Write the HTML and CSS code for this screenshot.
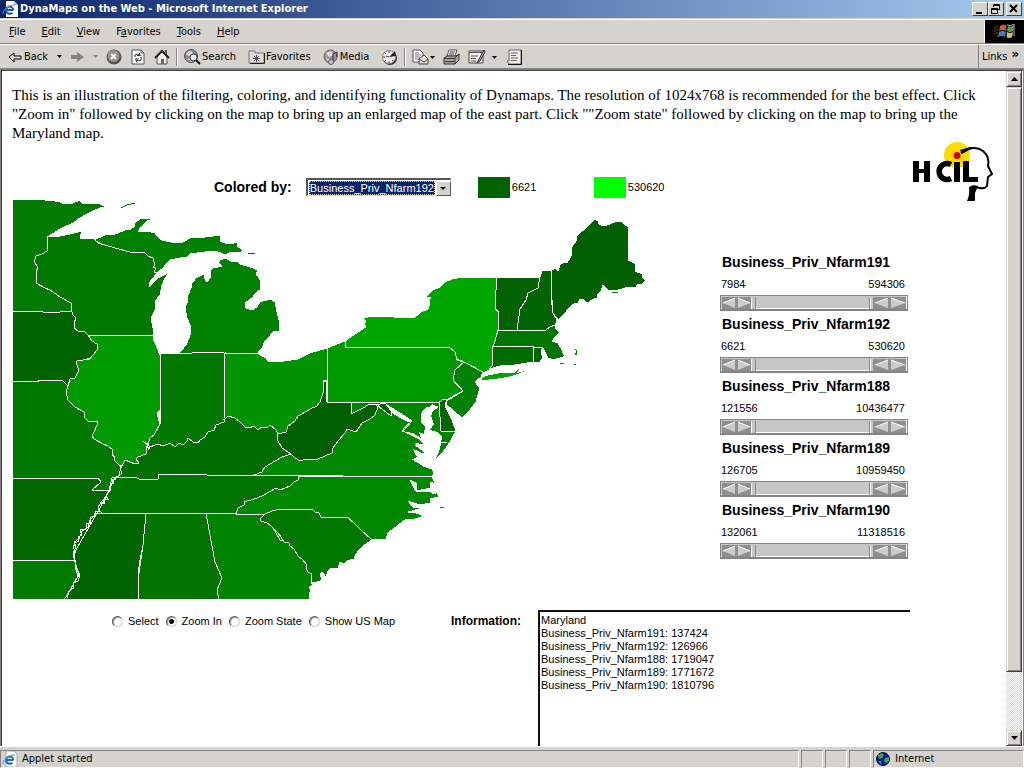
FILE: index.html
```html
<!DOCTYPE html>
<html lang="en">
<head>
<meta charset="utf-8">
<title>DynaMaps on the Web</title>
<link rel="stylesheet" href="styles.css">
</head>
<body>
<div class="window">
  <header class="titlebar">
    <svg class="ie-icon" width="16" height="16" viewBox="0 0 16 16"><path d="M4 0h8l4 4v12H4z" fill="#fff"/><path d="M12 0v4h4z" fill="#bbb"/><path d="M11.500 9H4.500M11.300 9a3.600 3.600 0 1 0-1 2.700" fill="none" stroke="#1b5bb8" stroke-width="2"/><path d="M1 13C0 10 7 3 13 4" fill="none" stroke="#4b93e0"/></svg>
    <h1>DynaMaps on the Web - Microsoft Internet Explorer</h1>
    <div class="window-buttons">
      <button aria-label="Minimize"><svg width="14" height="12"><path d="M3 9h6v2H3z"/></svg></button>
      <button aria-label="Restore"><svg width="14" height="12" fill="none" stroke="#000"><path d="M4.500 4V1.500h6v5H9M4 2.500h7M2.500 5.500h6v5h-6zM2 6.500h7"/></svg></button>
      <button class="close" aria-label="Close"><svg width="14" height="12"><path d="M3 2l7 7M10 2L3 9" stroke="#000" stroke-width="2"/></svg></button>
    </div>
  </header>
  <div class="menurow">
    <nav class="menubar">
      <button><u>F</u>ile</button><button><u>E</u>dit</button><button><u>V</u>iew</button><button>F<u>a</u>vorites</button><button><u>T</u>ools</button><button><u>H</u>elp</button>
    </nav>
    <div class="throbber"><svg width="38" height="22" viewBox="0 0 38 22"><path d="M14 6q4-3 7 0l-1 5q-3-2-7 0z" fill="#c65a3c"/><path d="M22 6q3 2 6-1l-1 6q-3 2-6 0z" fill="#5a9c50"/><path d="M13 12q4-2 7 0l-1 5q-3-2-7 0z" fill="#5078c0"/><path d="M21 12q3 2 6 0l-1 5q-3 2-6 0z" fill="#d8c050"/><path d="M11 6v11M9 7v9" stroke="#78503c" stroke-dasharray="2 1"/><path d="M20.500 6v11" stroke="#222"/><path d="M21 5q4 2 7-1v12" fill="none" stroke="#aaa"/></svg></div>
  </div>
  <div class="toolbar">
    <div class="tools">
      <button class="back"><svg width="14" height="12" viewBox="0 0 14 12"><path d="M1 6l5-4v3h7v3H6v3z" fill="#ddd" stroke="#000"/></svg>Back</button>
      <button class="drop" aria-label="Back history"><svg width="5" height="3"><path d="M0 0h5L2.500 3z"/></svg></button>
      <button class="fwd" aria-label="Forward"><svg width="13" height="12"><path d="M0 4h6V1l7 5-7 5V8H0z" fill="#848284"/></svg></button>
      <button class="drop" aria-label="Forward history"><svg width="5" height="3"><path d="M0 0h5L2.500 3z" fill="#848284"/></svg></button>
      <button class="stop" aria-label="Stop"><svg width="16" height="16"><circle cx="8" cy="8" r="7.500" fill="#555"/><circle cx="7.500" cy="7" r="6" fill="#949494"/><path d="M5 5l5 5M10 5l-5 5" stroke="#fff" stroke-width="2"/></svg></button>
      <button class="refresh" aria-label="Refresh"><svg width="14" height="16" fill="none"><path d="M1 1h9l3 3v11H1z" fill="#fff" stroke="#555"/><path d="M10 1v3h3" stroke="#555"/><path d="M4 8V6q2-2 5 0M8 3.500l1.500 3H6M10 8v3q-2 2-5 0M6 13.500L4.500 10H8" stroke="#333"/></svg></button>
      <button class="home" aria-label="Home"><svg width="16" height="16"><path d="M3 8l5-5 5 5v7H3z" fill="#eee" stroke="#555"/><path d="M1 9l7-7 7 7" fill="none" stroke="#222" stroke-width="2"/><path d="M11 1h2v4h-2z" fill="#555"/><path d="M7 10h3v5H7z" fill="#666"/></svg></button>
      <span class="sep"></span>
      <button class="search"><svg width="18" height="16"><circle cx="7" cy="7" r="6.500" fill="#8c8c8c" stroke="#555"/><path d="M2 5l3-3 4 1-3 4-3-1zM3 10l4-1 1 4z" fill="#ddd"/><circle cx="9.500" cy="8.500" r="3.500" fill="#eee" stroke="#333"/><path d="M12 11l4 4" stroke="#111" stroke-width="2"/></svg>Search</button>
      <button class="favs"><svg width="17" height="14"><path d="M1 3V1h6v2h9v10H1z" fill="#ddd" stroke="#777"/><path d="M16.500 3v10.500H2" fill="none" stroke="#222"/><path d="M8.500 5v7M5 8.500h7M6 6l5 5M11 6l-5 5" stroke="#555"/></svg>Favorites</button>
      <button class="media"><svg width="17" height="16"><circle cx="7.500" cy="7.500" r="6.500" fill="#9a9a9a" stroke="#666"/><path d="M3 4l5-2 2 4-4 2zM3 9l3 1v4z" fill="#ddd"/><path d="M10 13V5l4-2" fill="none" stroke="#333"/><circle cx="8" cy="13" r="2.500" fill="#ccc" stroke="#555"/><path d="M14 3v5" stroke="#222"/></svg>Media</button>
      <button class="history" aria-label="History"><svg width="17" height="16"><circle cx="9" cy="9" r="7" fill="#333"/><circle cx="8" cy="8" r="6.500" fill="#f2f2f2" stroke="#888"/><path d="M8 8l6-6 1 5z" fill="#222"/><path d="M8 2v2M8 12v2M2 8h2M3.500 3.500L5 5M3.500 12.500L5 11M12 12l-1-1M5 7l3 1" stroke="#444"/></svg></button>
      <span class="sep"></span>
      <button class="mail" aria-label="Mail"><svg width="23" height="16"><path d="M1 1h7l3 3v9H1z" fill="#fff" stroke="#555"/><path d="M3 4h4M3 6h6M3 8h5M3 10h4" stroke="#777"/><path d="M7 10l5-4 4 4v5H7z" fill="#e4e4e4" stroke="#444"/><path d="M7 10l5 3 4-3" fill="none" stroke="#444"/><path d="M18 7h5l-2.500 3z"/></svg></button>
      <button class="print" aria-label="Print"><svg width="17" height="16"><path d="M6 1h8l-2 6H4z" fill="#fff" stroke="#555"/><path d="M1 9l3-2h9l3-2v6l-4 4H1z" fill="#aaa" stroke="#333"/><path d="M1 9.500h11V15M12 9l4-4M2 12.500h9M7 3h5M6 5h5" fill="none" stroke="#333"/></svg></button>
      <button class="edit" aria-label="Edit"><svg width="29" height="16"><path d="M1 2h14v12H1z" fill="#f2f2f2" stroke="#444"/><path d="M1 3.500h14M3 7h7M3 9.500h5M3 12h5" stroke="#555"/><path d="M16 1l-6 11-1 2 3-2 5-9z" fill="#aaa" stroke="#333"/><path d="M24 7h5l-2.500 3z"/></svg></button>
      <button class="discuss" aria-label="Discuss"><svg width="16" height="16"><path d="M3 1h12v14H3l-2-3h2z" fill="#eee" stroke="#666"/><path d="M15.500 1v14.500H2" fill="none" stroke="#111"/><path d="M5 4h7M5 6.500h5M5 9h7M5 11.500h6" stroke="#666"/></svg></button>
    </div>
    <button class="links">Links <b>»</b></button>
  </div>

  <div class="viewport">
    <main class="document">
      <p class="intro">This is an illustration of the filtering, coloring, and identifying functionality of Dynamaps. The resolution of 1024x768 is recommended for the best effect. Click "Zoom in" followed by clicking on the map to bring up an enlarged map of the east part. Click ""Zoom state" followed by clicking on the map to bring up the Maryland map.</p>
      <div class="body">
        <div class="applet">
          <section class="mapside">
            <div class="legend">
              <label for="by">Colored by:</label>
              <span class="combo"><select id="by"><option>Business_Priv_Nfarm192</option></select><svg width="14" height="14" class="combo-arrow"><path d="M4 6h6l-3 3z"/></svg></span>
              <span class="swatch low"></span><span class="low-value">6621</span>
              <span class="swatch high"></span><span>530620</span>
            </div>
            <svg class="map" viewBox="12 200 636 399" role="img" aria-label="Map of the eastern United States">
              <g stroke="#fff" stroke-width="1" stroke-linejoin="round">
                <path fill="#007a00" d="M12 199L45 200L55 201L60 202L64 204L73 203L80 200L83 204L92 203L100 204L102 205L109 206L100 208L89 213L80 218L73 223L60 229L54 233L50 235L47 238V251L42 254L36 256L34 262L38 267L36 272V283L45 288L50 290L60 297L71 303L72 313H12z"/>
                <path fill="#008000" d="M94 240L105 235L115 234L125 230L131 229L135 226L134 223L140 219L155 218L147 221L143 225L140 228L138 232L148 231L155 233L158 237L162 240L175 243L183 242L190 238L205 237L213 236L220 235V241L225 243L231 244L237 242L238 247L243 250L240 253L231 252L225 255L216 251L205 252L190 254L187 257L180 258L170 260L163 268L157 273L140 265z"/>
                <path fill="#006600" d="M12 478H102L130 476L110 530L90 560H12z"/>
                <path fill="#007a00" d="M12 560H90L79 600H12z"/>
                <path fill="#007800" d="M12 382L66 380H110L130 450L126 466L120 476L112 478L109 490H92L101 482L98 478H12z"/>
                <path fill="#006400" d="M12 311L43 312H60L72 311L73 315L76 318L74 323V328L78 331L85 332L88 335L97 344V350L93 355L90 358L84 360L77 361L76 363L79 367V371L75 378L70 380L68 386L65 383L62 380L38 381L12 382z"/>
                <path fill="#007800" d="M47 237V251L42 254L36 256L34 262L38 267L36 272V283L45 288L50 290L60 297L71 303L72 312L73 315L76 318L74 323V328L78 331L85 332L88 335H153V328L151 318L155 310L156 300L160 295L162 285L165 278L172 270L166 274L158 278L149 287V283L157 273L154 272L156 268L153 267L155 265L153 258L148 256L145 253L130 252L115 248L98 243L94 239L80 238L82 231L70 234L60 236z"/>
                <path fill="#008000" d="M173 356L180 352L186 345L190 335L191 328L187 318L185 308L188 300L187 297L191 288L192 283L196 278L204 274L205 279L207 282L210 278V270L213 268L222 266L218 263L220 260L225 258L231 261L238 262L240 264L250 267L258 270L256 275L258 276L260 280V290L256 293L252 298L245 303L246 308L252 310L257 307L260 302L270 299L275 302L277 312L280 324L279 331L273 332L269 337L265 341L262 348L257 354z"/>
                <path fill="#006e00" d="M118 480L122 462L148 442L228 410L280 426L300 454L256 480z"/>
                <path fill="#007800" d="M160 354L225 352V415L224 422L216 425L214 430L208 432L205 437L200 440L198 443L193 442L188 438L187 441L183 445L179 443L175 447L170 443L163 446L158 444L147 448L150 438L160 424z"/>
                <path fill="#009900" d="M88 335H153L154 341L156 345L160 355V410L157 414L160 424L154 435L150 438L147 446L146 454L138 457L136 459L139 463L135 464L125 460L122 466L119 465L114 460L115 457L112 455L113 450L108 446L103 444L94 439L92 436L95 430L98 422L88 421L84 417V412L75 407L68 400L66 392L68 386L70 379L75 378L79 370L76 363L77 361L90 359L93 355L97 350V344L92 341z"/>
                <path fill="#009300" d="M225 353H257L266 358L268 361H284L298 359L310 353L327 348V380L323 381L324 390L320 402L317 406L310 409L302 414L298 416L295 421L288 426L286 432L278 434L276 430L270 425L268 427L262 427L258 430L254 426L249 428L245 427L240 422L235 418L228 416L224 420z"/>
                <path fill="#007400" d="M115 477L129 478L135 477L139 479H158V474L255 476H300L298 482L290 486L236 513H97L105 499z"/>
                <path fill="#006400" d="M97 513H146L143 545L140 560L138 575L139 600H64L79 575L73 555z"/>
                <path fill="#007300" d="M146 513H206L209 530L215 562L222 578L217 590L219 600H139L138 580L143 545z"/>
                <path fill="#008400" d="M206 513H265L300 540L311 570V582L313 585L309 587L311 590L309 594L310 600H219L217 590L222 578L215 562L209 530z"/>
                <path fill="#008800" d="M236 514L238 508L244 505V502L254 499L262 496L269 492L276 488L280 490L290 486L294 482L298 480V476H432L435 484L431 482L430 488L417 491L416 483L410 480L414 488L417 492L430 491L434 494L437 492L439 497L430 499V503L420 505L408 501L413 507L423 508L408 512L416 513L424 516L415 519L405 520L397 526L388 533L386 539L372 540L280 540L265 514z"/>
                <path fill="#007800" d="M260 519L265 514L272 511L280 509H312L315 512L319 513L321 517H347L354 523L360 529L372 540L363 546L356 554L354 559L347 561L344 564L340 562L338 569L332 568L328 571L326 577L322 572L320 574L322 580L315 583L311 582L312 574L308 572L306 568V564L303 560L298 556L294 549L290 546L289 543L284 542L281 537L278 533L270 525L267 523L261 521z"/>
                <path fill="#008800" d="M254 475L262 472L265 467L275 461L282 457L291 454L340 410L378 404L401 418L412 423L403 431L416 435L425 441L427 446L415 445L426 453L414 459L424 466L432 468L434 473L432 477z"/>
                <path fill="#008400" d="M351 402H439L441 431H456L450 442L443 452L435 460L439 447L425 441L403 431L412 421L403 415L387 405L378 404L365 410L351 414z"/>
                <path fill="#006000" d="M326 381L323 381L324 390L320 402L317 406L310 409L302 414L298 416L295 421L288 426L286 432L278 434L277 439L282 448L291 454L295 458L300 461L306 459L311 460L318 459L325 456L332 453V449L339 440L345 433L347 429L356 432L362 423L370 419L375 415L378 407L375 404L368 405L363 408L351 414V402H327z"/>
                <path fill="#006000" d="M378 406L381 403H385L389 408L392 412L391 416L386 412z"/>
                <path fill="#009800" d="M327 348L345 341V347H449L455 352L457 360L464 362L458 367L455 374L453 380L458 386L463 391L455 395L447 400L439 402H327z"/>
                <path fill="#00a600" d="M345 347V341L355 334L361 330L366 327L364 324L366 321L362 318L375 316H393L396 318L415 317L421 312L428 309L430 303L429 300L431 297L426 297L433 290L440 287L445 282L452 279L462 277H497L496 290L495 309L499 312L498 330L494 345L493 359L492 368L484 373L464 362L457 359L455 352L449 347z"/>
                <path fill="#008000" d="M464 362L483 372L481 377L475 382L480 388L476 402L470 410L462 418L456 413L447 405L445 402L455 396L463 391L458 385L453 380L455 370z"/>
                <path fill="#006400" d="M439 402L444 399L447 400L445 405L447 410L452 420L456 431H441z"/>
                <path fill="#00a600" stroke="none" d="M481 379L486 376L500 373H514L519 369L517 373L525 371L515 375L507 377L495 379L482 380z"/>
                <path fill="#006200" d="M497 277H540L538 290L528 293L526 300L520 309L517 330H498L499 312L495 309L496 290z"/>
                <path fill="#006400" d="M540 277L542 271L551 270V300L554 315L557 320L555 326L550 327L546 331L517 330L520 309L526 300L528 293L538 288z"/>
                <path fill="#006000" d="M551 270L556 268L558 271L560 265L564 262L567 263L571 256V248L576 241L577 236L595 219L598 221L599 224L604 226L610 224L617 221L622 222L628 227V260L636 264L635 271L642 274L643 278L646 280L642 284L638 284L636 287L625 288L615 291L608 290L603 285L601 291L598 294L597 298L594 299L587 303L584 300L580 299L578 303L575 303L569 308L565 313L558 320L553 313L552 300z"/>
                <path fill="#007600" d="M498 330H546L550 327L555 325L556 329L560 332L557 335L552 341L558 343L562 350L564 355L574 355L576 351L572 346L577 350L577 355L563 357L553 360L548 358L543 348H493z"/>
                <path fill="#006c00" d="M493 346H533V362L515 365L500 366L489 369L492 366z"/>
                <path fill="#006600" d="M533 347H543L541 352L543 358L540 362L533 363z"/>
              </g>
              <path fill="#fff" d="M423 410L427 407L430 407L432 404L439 407L433 411L431 416L434 424L430 430L438 432L442 437L441 444L439 452L435 459L436 466L433 470L424 467L418 463L411 459L424 461L416 456L413 449L425 454L424 449L414 443L424 444L418 439L402 431L413 433L421 438L419 432L424 434L425 427L421 422L421 414z"/>
              <path class="line" d="M122 466L120 469L122 473L119 476L116 477L115 480L112 479L114 483L110 484L111 489L109 492L106 496L108 499L103 499L105 503L100 504L98 508L101 512L96 511L94 516L91 517L90 523L86 524L86 529L80 530L82 535L78 537L79 541L75 543L73 548L76 551L74 554L75 561L76 568L80 575L78 581L73 583L74 588L69 591L67 598"/>
              <path class="line" d="M111 487L107 495L99 505L98 512L90 520L88 527L82 531L79 539L74 542L76 547L73 553L75 560L76 570L78 576L73 585L66 597"/>
              <path class="line" d="M403 415L408 419L412 421L404 428L402 432M143 441L150 447L148 450M441 442H447"/>
              <path fill="none" stroke="#007a00" d="M121 208L127 205L135 203M248 253H255M440 508L444 507M560 363H564M574 364H576M612 292H618"/>
            </svg>
          </section>
          <section class="filters">
            <div class="filter"><h2>Business_Priv_Nfarm191</h2><div class="limits"><span>7984</span><span>594306</span></div><div class="slider"><input type="range" value="0" aria-label="191 minimum"><input type="range" class="max" value="100" aria-label="191 maximum"></div></div>
            <div class="filter"><h2>Business_Priv_Nfarm192</h2><div class="limits"><span>6621</span><span>530620</span></div><div class="slider"><input type="range" value="0" aria-label="192 minimum"><input type="range" class="max" value="100" aria-label="192 maximum"></div></div>
            <div class="filter"><h2>Business_Priv_Nfarm188</h2><div class="limits"><span>121556</span><span>10436477</span></div><div class="slider"><input type="range" value="0" aria-label="188 minimum"><input type="range" class="max" value="100" aria-label="188 maximum"></div></div>
            <div class="filter"><h2>Business_Priv_Nfarm189</h2><div class="limits"><span>126705</span><span>10959450</span></div><div class="slider"><input type="range" value="0" aria-label="189 minimum"><input type="range" class="max" value="100" aria-label="189 maximum"></div></div>
            <div class="filter"><h2>Business_Priv_Nfarm190</h2><div class="limits"><span>132061</span><span>11318516</span></div><div class="slider"><input type="range" value="0" aria-label="190 minimum"><input type="range" class="max" value="100" aria-label="190 maximum"></div></div>
          </section>
          <div class="bottom">
            <div class="modes">
              <label><input type="radio" name="mode">Select</label>
              <label><input type="radio" name="mode" checked>Zoom In</label>
              <label><input type="radio" name="mode">Zoom State</label>
              <label><input type="radio" name="mode">Show US Map</label>
            </div>
            <label class="info-label" for="info">Information:</label>
            <textarea id="info">Maryland
Business_Priv_Nfarm191: 137424
Business_Priv_Nfarm192: 126966
Business_Priv_Nfarm188: 1719047
Business_Priv_Nfarm189: 1771672
Business_Priv_Nfarm190: 1810796</textarea>
          </div>
        </div>
        <svg class="logo" width="84" height="62" viewBox="910 142 84 62" role="img" aria-label="HCIL">
          <circle cx="957" cy="156" r="13" fill="#ffdc00"/>
          <path d="M913 162h6v8h5v-8h6v21h-6v-9h-5v9h-6zM954 163h6v20h-6zM963 162h6v16h9v5h-15z"/>
          <path d="M951 165.500a8 8 0 1 0 0 14" fill="none" stroke="#000" stroke-width="5.500"/>
          <circle cx="957" cy="156.500" r="3.500" fill="#d40000"/>
          <path d="M961 154Q974 145 983 152Q990 158 988 167L992 175L988 178L987 187Q984 191 976 188" fill="none" stroke="#000" stroke-width="2"/>
          <path d="M960 151l10-3 4 1-5 2-7 4zM969 188q4-3 9-1l-3 7v8h-8q3-6 2-14z"/>
        </svg>
      </div>
    </main>
    <div class="scrollbar">
      <button aria-label="Scroll up"><svg width="7" height="4"><path d="M0 4h7L3.500 0z"/></svg></button>
      <div class="track"><div class="thumb"></div></div>
      <button aria-label="Scroll down"><svg width="7" height="4"><path d="M0 0h7L3.500 4z"/></svg></button>
    </div>
  </div>
  <footer class="statusbar">
    <div class="pane message"><svg class="ie-icon" width="16" height="16" viewBox="0 0 16 16"><path d="M4 0h8l3 3v13H4z" fill="#fff" stroke="#aaa"/><path d="M11.500 9H4.500M11.300 9a3.600 3.600 0 1 0-1 2.700" fill="none" stroke="#1b6bc8" stroke-width="2"/><path d="M1 13C0 10 7 3 13 4" fill="none" stroke="#4b93e0"/></svg>Applet started</div>
    <div class="pane"></div><div class="pane"></div><div class="pane"></div>
    <div class="pane zone"><svg width="14" height="14"><circle cx="7" cy="7" r="6.500" fill="#0a1a9c" stroke="#112"/><path d="M2 3l4-2 2 2-2 3-3 1zM9 6l4-1v4l-3 2-2-2zM2 9l3 0 1 4z" fill="#3ca84c"/></svg>Internet</div>
  </footer>
</div>
</body>
</html>
```
FILE: styles.css
```css
* { box-sizing: border-box; }
body { margin: 0; background: #d6d3ce; }
button { border: 0; padding: 0; margin: 0; background: none; font: inherit; color: #000; }
svg { display: block; flex: none; }
.window { display: flex; flex-direction: column; height: 100vh; overflow: hidden; font: 11px/14px "DejaVu Sans Condensed", "DejaVu Sans", sans-serif; color: #000; }

.titlebar { display: flex; align-items: center; height: 18px; padding: 0 2px; background: linear-gradient(90deg, #0a246a, #a6caf0); color: #fff; }
.titlebar h1 { flex: 1; margin: 0 0 0 2px; font-size: 11px; }
.window-buttons { display: flex; }
.window-buttons button { width: 16px; height: 14px; background: #d6d3ce; border: 1px solid; border-color: #fff #404040 #404040 #fff; }
.window-buttons .close { margin-left: 2px; }

.menurow, .toolbar { display: flex; border-top: 1px solid #fff; border-bottom: 1px solid #848284; height: 25px; }
.menurow { margin-top: 1px; }
.menubar { flex: 1; display: flex; align-items: center; gap: 16px; padding-left: 9px; }
.throbber { width: 40px; padding-left: 1px; background: #000; border-left: 1px solid #fff; }
.tools { flex: 1; display: flex; align-items: center; padding-left: 8px; }
.tools button { display: flex; align-items: center; }
.back { gap: 2px; }
.drop { margin-left: 9px; }
.fwd { margin-left: 9px; }
.stop { margin-left: 8px; }
.refresh { margin-left: 9px; }
.home { margin-left: 9px; }
.sep { width: 2px; height: 18px; margin: 0 6px; border-left: 1px solid #848284; border-right: 1px solid #fff; }
.tools .favs { margin-left: 12px; gap: 1px; }
.tools .media { margin-left: 12px; }
.history { margin-left: 12px; }
.print { margin-left: 8px; }
.edit { margin-left: 8px; }
.discuss { margin-left: 9px; }
.links { width: 46px; display: flex; gap: 4px; padding: 5px 0 0 3px; border-left: 1px solid #848284; }
.links b { line-height: 8px; font-size: 13px; }

.viewport { flex: 1; min-height: 0; display: flex; border: 1px solid #848284; border-width: 1px 1px 0 1px; box-shadow: inset 1px 1px #404040; background: #fff; padding: 1px 1px 0 1px; }
.document { flex: 1; min-width: 0; overflow: hidden; padding: 15px 12px 0 10px; }
.intro { margin: 0; font: 15px/19px "Liberation Serif", "Times New Roman", serif; padding-right: 10px; }
.body { display: flex; font-family: "Liberation Sans", Arial, sans-serif; }
.applet { flex: 1; display: grid; grid-template-columns: 1fr 190px; row-gap: 11px; }
.legend { display: flex; align-items: center; height: 57px; padding: 33px 0 2px 202px; }
.legend label { font-size: 14px; font-weight: bold; margin-right: 14px; white-space: nowrap; }
.combo { position: relative; flex: none; width: 145px; height: 18px; border: 2px solid; border-width: 2px 1px 1px 2px; border-color: #555 #d6d3ce #d6d3ce #555; }
.combo select { display: block; width: 126px; height: 14px; margin: 1px; padding: 0; border: 1px dotted #dca; background: #0a246a; color: #fff; font: 11px/12px "Liberation Sans", Arial, sans-serif; appearance: none; border-radius: 0; }
.combo-arrow { position: absolute; right: 0; top: 1px; background: #d6d3ce; box-shadow: 1px 1px #555, inset 1px 1px #fff; }
.swatch { width: 32px; height: 21px; margin-right: 2px; flex: none; }
.low { background: #006400; margin-left: 27px; }
.high { background: #0f0; }
.low-value { width: 82px; }
.map { width: 636px; max-width: 100%; height: auto; shape-rendering: crispEdges; }
.line { fill: none; stroke: #fff; stroke-width: 1; }

.filters { padding-top: 111px; width: 188px; }
.filter { height: 62px; }
.filter h2 { margin: 0 2px 4px; font-size: 14px; line-height: 17px; }
.limits { display: flex; justify-content: space-between; padding: 0 3px 0 1px; line-height: 19px; }
.slider { display: grid; height: 16px; margin-top: 1px; padding: 1px; background: #c6c6c6; border: solid #848484; border-width: 1px 1px 2px; box-shadow: inset -1px -1px #fff; }
.slider input { grid-area: 1 / 1; appearance: none; width: 100%; height: 12px; margin: 0; background: none; pointer-events: none; }
.slider input::-webkit-slider-thumb { appearance: none; pointer-events: auto; width: 34px; height: 12px; border: 0; background: url("data:image/svg+xml,%3Csvg xmlns='http://www.w3.org/2000/svg' width='34' height='12'%3E%3Cpath d='M0 0h29v12H0z' fill='%238c9090'/%3E%3Cpath d='M1 6L13 1v10zM28 6L16 1v10z' fill='%23ccc'/%3E%3Cpath d='M1 6l12-5M16 1l12 5' stroke='%23fff'/%3E%3Cpath d='M29 0h5v12h-5z' fill='%23c6c6c6'/%3E%3Cpath d='M29.5 12V.5' stroke='%23fff'/%3E%3Cpath d='M33.500 0v12' stroke='%23888'/%3E%3C/svg%3E"); }
.slider .max::-webkit-slider-thumb { width: 37px; background: url("data:image/svg+xml,%3Csvg xmlns='http://www.w3.org/2000/svg' width='37' height='12'%3E%3Cpath d='M4 0h33v12H4z' fill='%238c9090'/%3E%3Cpath d='M6 6l13-5v10zM36 6L22 1v10z' fill='%23ccc'/%3E%3Cpath d='M6 6l13-5M22 1l14 5' stroke='%23fff'/%3E%3Cpath d='M0 0h4v12H0z' fill='%23c6c6c6'/%3E%3Cpath d='M.5 12V0' stroke='%23888'/%3E%3Cpath d='M1.500 12V0' stroke='%23fff'/%3E%3C/svg%3E"); }

.bottom { grid-column: 1 / 3; display: flex; align-items: flex-start; }
.modes { display: flex; gap: 7px; padding: 4px 0 0 100px; width: 439px; }
.modes label { display: flex; align-items: center; gap: 5px; white-space: nowrap; }
.modes input { appearance: none; width: 11px; height: 11px; margin: 0; border: 1px solid; border-color: #555 #ccc #ccc #555; border-radius: 50%; box-shadow: inset 1px 1px #999; }
.modes input:checked { background: radial-gradient(circle, #000 2px, #fff 3px); }
.info-label { width: 87px; padding-top: 4px; font-size: 12px; font-weight: bold; }
#info { flex: 1; height: 150px; padding: 2px 1px; border: solid #111; border-width: 2px 0 0 2px; border-radius: 0; outline: 0; resize: none; overflow: hidden; color: #000; font: 11px/13px "Liberation Sans", Arial, sans-serif; }
.logo { margin-top: -2px; }

.scrollbar { width: 16px; display: flex; flex-direction: column; background: #d6d3ce; }
.scrollbar button { display: flex; align-items: center; justify-content: center; height: 16px; background: #d6d3ce; border: 1px solid; border-color: #d6d3ce #404040 #404040 #d6d3ce; box-shadow: inset 1px 1px #fff, inset -1px -1px #848284; }
.track { flex: 1; background: repeating-conic-gradient(#fff 0 25%, #d6d3ce 0 50%) 0 0 / 2px 2px; }
.thumb { height: 91%; background: #d6d3ce; border: 1px solid; border-color: #d6d3ce #404040 #404040 #d6d3ce; box-shadow: inset 1px 1px #fff, inset -1px -1px #848284; }

.statusbar { display: flex; gap: 2px; height: 22px; padding-top: 3px; border-top: 1px solid #fff; }
.pane { width: 22px; border: 1px solid; border-color: #848284 #fff #fff #848284; }
.message { flex: 1; display: flex; align-items: center; gap: 4px; padding-left: 1px; }
.zone { width: 151px; display: flex; align-items: center; gap: 5px; padding-left: 2px; }
```
